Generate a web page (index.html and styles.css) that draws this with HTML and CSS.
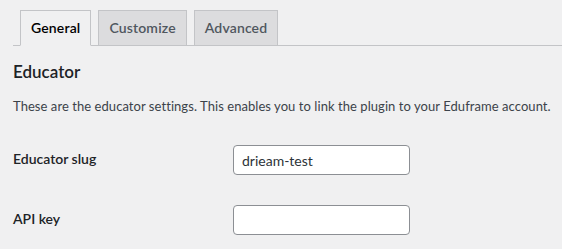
FILE: index.html
```html
<!DOCTYPE html>
<html>
<head>
<meta charset="utf-8">
<link rel="stylesheet" href="styles.css">
</head>
<body>
<div class="wrap">
  <nav class="nav-tab-wrapper">
    <a class="nav-tab nav-tab-active">General</a>
    <a class="nav-tab">Customize</a>
    <a class="nav-tab">Advanced</a>
  </nav>
  <h2 class="section-title">Educator</h2>
  <p class="section-desc">These are the educator settings. This enables you to link the plugin to your Eduframe account.</p>
  <table class="form-table">
    <tbody>
      <tr>
        <th class="row-label">Educator slug</th>
        <td class="row-field"><input class="text-input" type="text" value="drieam-test"></td>
      </tr>
      <tr>
        <th class="row-label">API key</th>
        <td class="row-field"><input class="text-input" type="text" value=""></td>
      </tr>
    </tbody>
  </table>
</div>
</body>
</html>
```
FILE: styles.css
```css
html, body {
  margin: 0;
  padding: 0;
  background: #f0f0f1;
}
body {
  font-family: "Lato", "Open Sans", sans-serif;
  font-size: 13px;
  color: #3c434a;
  line-height: 1.4;
}
.wrap {
  padding: 0 0 0 13px;
}
.nav-tab-wrapper {
  display: flex;
  align-items: flex-end;
  padding-top: 10px;
  border-bottom: 1px solid #c3c4c7;
  height: 35px;
  box-sizing: content-box;
}
.nav-tab {
  display: block;
  margin-left: 7px;
  margin-bottom: -1px;
  padding: 5px 10px;
  border: 1px solid #c3c4c7;
  background: #dcdcde;
  color: #50575e;
  font-size: 14px;
  line-height: 24px;
  font-weight: 600;
  letter-spacing: 0.15px;
  white-space: nowrap;
}
.nav-tab-active {
  background: #f0f0f1;
  border-bottom-color: #f0f0f1;
  color: #000;
}
.section-title {
  margin: 14px 0 0;
  font-size: 17px;
  font-weight: 600;
  line-height: 24px;
  color: #1d2327;
}
.section-desc {
  margin: 13px 0 0;
  font-size: 13px;
  line-height: 19px;
  letter-spacing: 0.06px;
}
.form-table {
  margin-top: 14px;
  border-collapse: collapse;
}
.row-label {
  width: 200px;
  padding: 20px 10px 20px 0;
  vertical-align: top;
  text-align: left;
  font-size: 14px;
  line-height: 18px;
  font-weight: 600;
  color: #1d2327;
}
.row-field {
  padding: 15px 10px;
  vertical-align: top;
}
.text-input {
  display: block;
  box-sizing: border-box;
  width: 177px;
  height: 30px;
  margin: 0;
  padding: 0 8px;
  border: 1px solid #8c8f94;
  border-radius: 4px;
  background: #fff;
  color: #2c3338;
  font-family: inherit;
  font-size: 14px;
}
```
